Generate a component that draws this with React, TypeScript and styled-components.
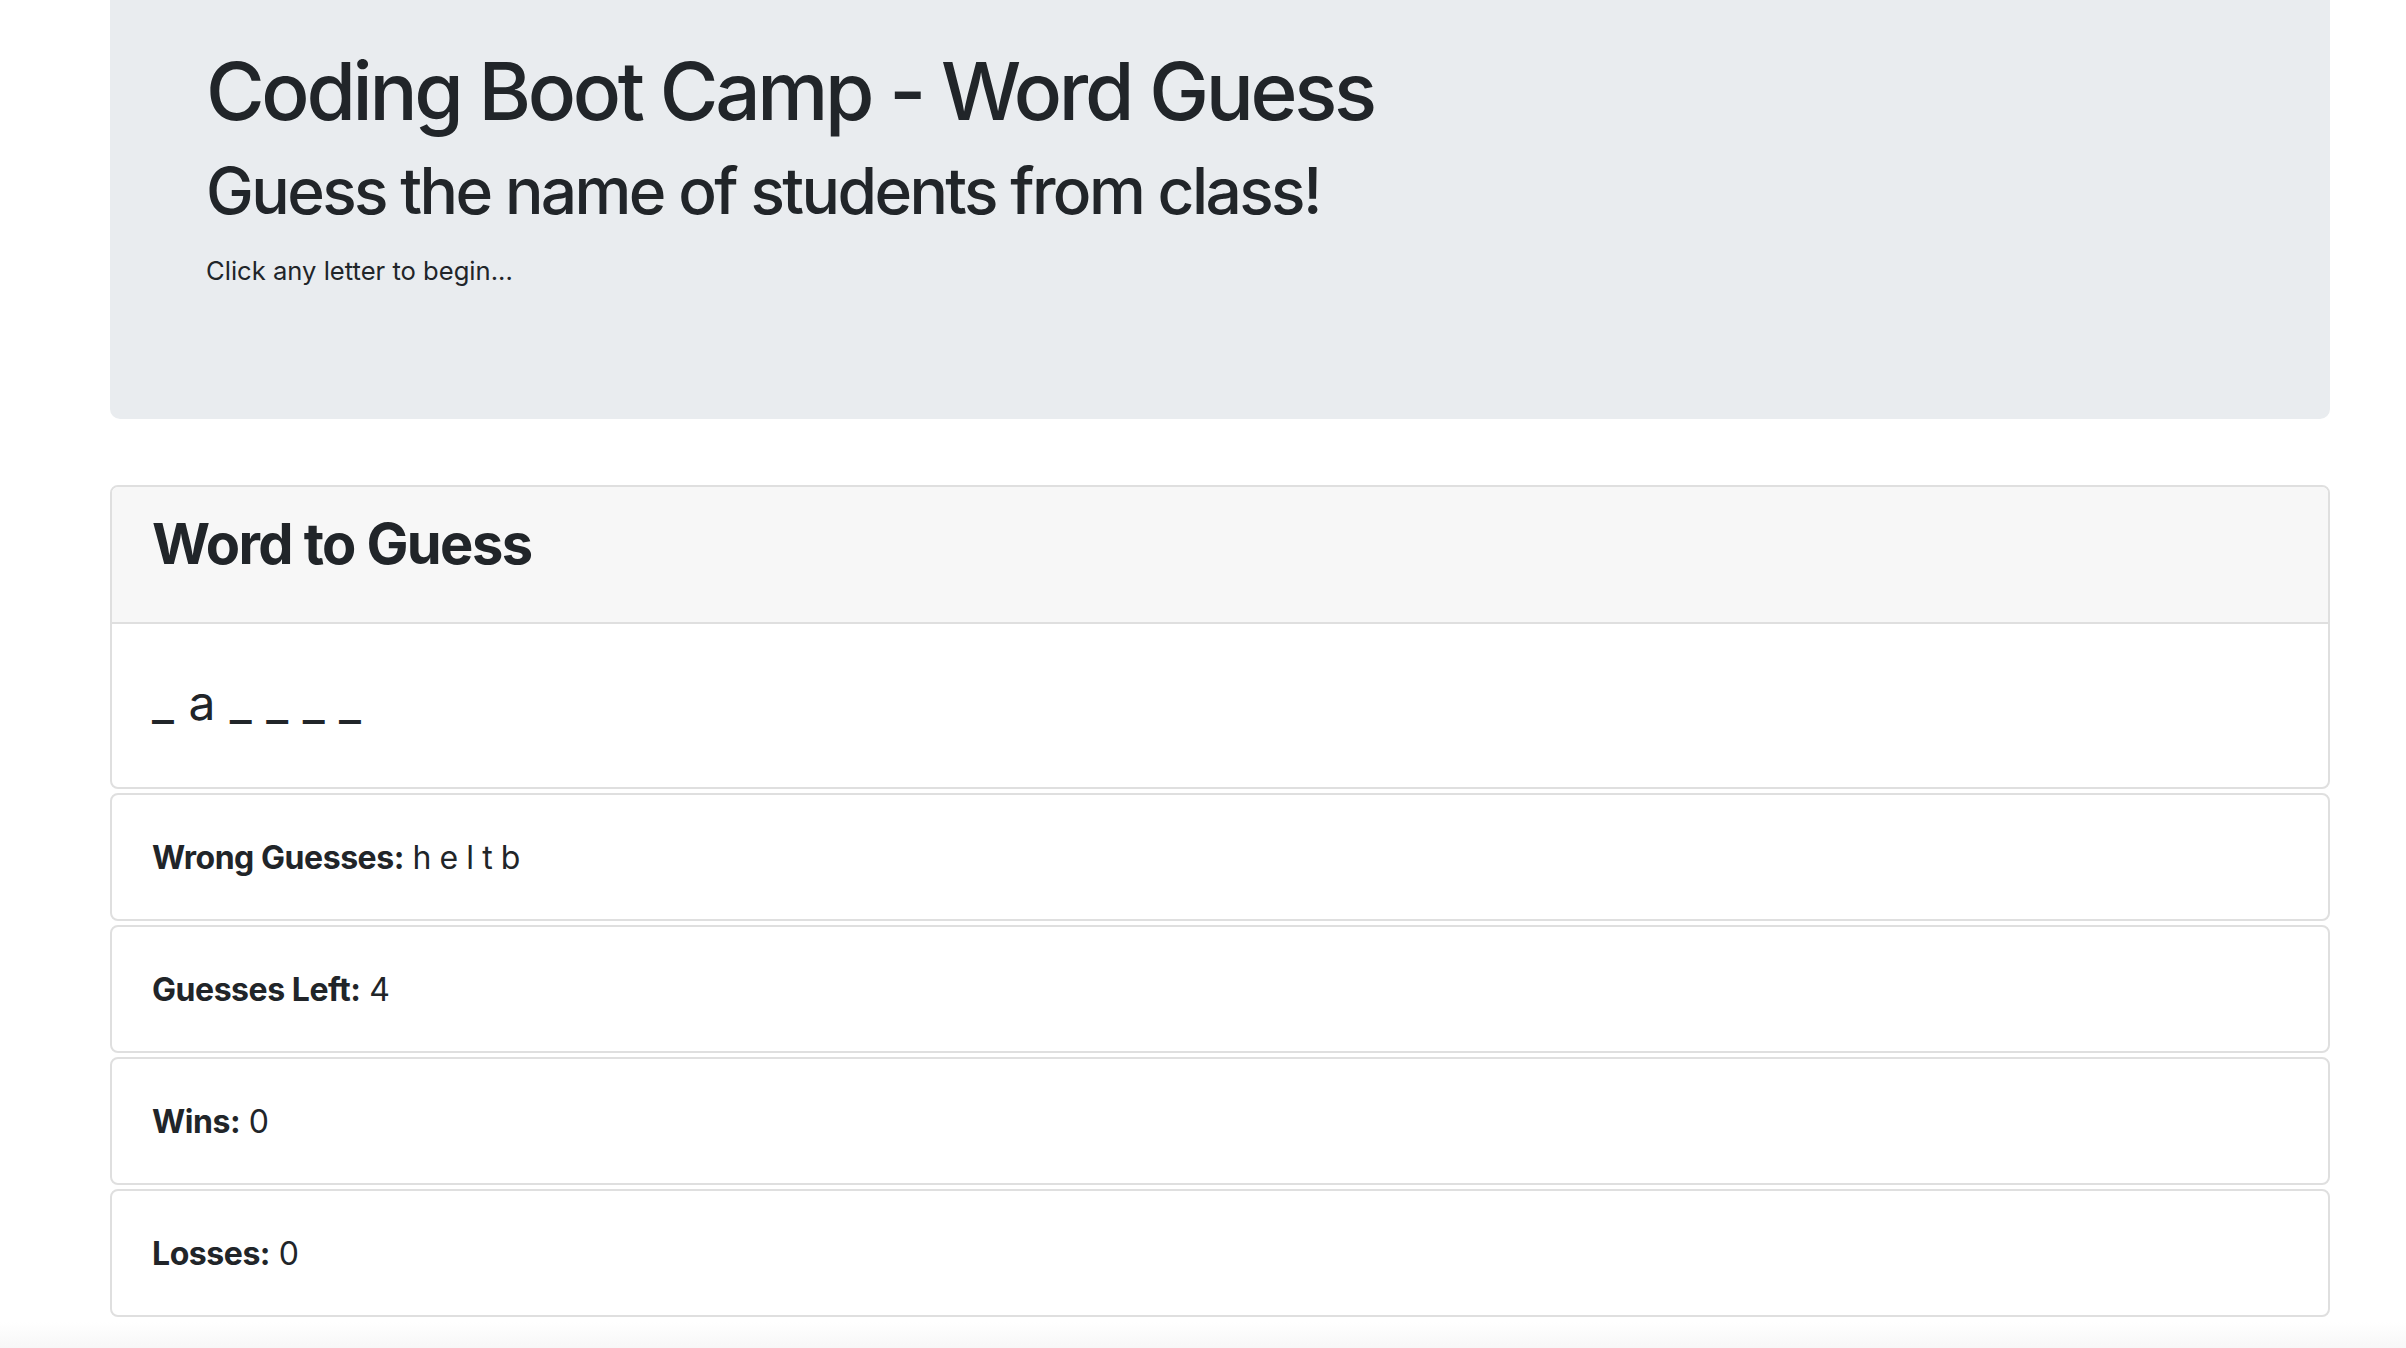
import React from "react";
import styled, { createGlobalStyle } from "styled-components";

const GlobalStyle = createGlobalStyle`
  html, body {
    margin: 0;
    padding: 0;
    background: #ffffff;
  }
  body {
    font-family: Inter, "Noto Sans", "Liberation Sans", sans-serif;
    color: #212529;
    -webkit-font-smoothing: antialiased;
  }
  * { box-sizing: border-box; }
`;

const Page = styled.div`
  display: flex;
  flex-direction: column;
  min-height: 1348px;
`;

const Container = styled.main`
  width: 2330px;
  padding-left: 110px;
  display: flex;
  flex-direction: column;
`;

const Jumbotron = styled.header`
  background: #e9ecef;
  border-radius: 0 0 10px 10px;
  padding: 43px 96px 129px;
  margin-bottom: 66px;
  display: flex;
  flex-direction: column;
`;

const Title = styled.h1`
  margin: 0 0 14px;
  font-size: 80px;
  line-height: 96px;
  font-weight: 500;
  letter-spacing: -3.3px;
`;

const Subtitle = styled.h2`
  margin: 0 0 22px;
  font-size: 64px;
  line-height: 76.8px;
  font-weight: 500;
  letter-spacing: -2.6px;
`;

const Hint = styled.small`
  display: block;
  font-size: 25.6px;
  line-height: 38.4px;
  font-weight: 400;
`;

const Stack = styled.section`
  display: flex;
  flex-direction: column;
  gap: 4px;
`;

const Card = styled.div`
  background: #fff;
  border: 2px solid #dfdfdf;
  border-radius: 8px;
  overflow: hidden;
  display: flex;
  flex-direction: column;
`;

const CardHeader = styled.div`
  background: #f7f7f7;
  border-bottom: 2px solid #dfdfdf;
  padding: 24px 40px 44px;
`;

const CardTitle = styled.h3`
  margin: 0;
  font-size: 56px;
  line-height: 67.2px;
  font-weight: 700;
  letter-spacing: -1.6px;
`;

const WordBody = styled.div`
  padding: 50px 40px 55px;
`;

const Word = styled.h4`
  margin: 0;
  font-size: 48px;
  line-height: 57.6px;
  font-weight: 400;
  letter-spacing: 0.5px;
  white-space: pre;
`;

const StatBody = styled.div`
  padding: 39px 40px 37px;
  font-size: 32px;
  line-height: 48px;
  letter-spacing: -0.45px;
`;

const Label = styled.strong`
  font-weight: 700;
`;

const BottomFade = styled.div`
  margin-top: auto;
  height: 26px;
  background: linear-gradient(#ffffff, #f7f7f7);
`;

const stats: { label: string; value: string }[] = [
  { label: "Wrong Guesses:", value: "h e l t b" },
  { label: "Guesses Left:", value: "4" },
  { label: "Wins:", value: "0" },
  { label: "Losses:", value: "0" },
];

export default function App() {
  return (
    <>
      <GlobalStyle />
      <Page>
        <Container>
          <Jumbotron>
            <Title>Coding Boot Camp - Word Guess</Title>
            <Subtitle>Guess the name of students from class!</Subtitle>
            <Hint>Click any letter to begin...</Hint>
          </Jumbotron>
          <Stack>
            <Card>
              <CardHeader>
                <CardTitle>Word to Guess</CardTitle>
              </CardHeader>
              <WordBody>
                <Word>_ a _ _ _ _</Word>
              </WordBody>
            </Card>
            {stats.map((s) => (
              <Card key={s.label}>
                <StatBody>
                  <Label>{s.label}</Label> {s.value}
                </StatBody>
              </Card>
            ))}
          </Stack>
        </Container>
        <BottomFade />
      </Page>
    </>
  );
}
